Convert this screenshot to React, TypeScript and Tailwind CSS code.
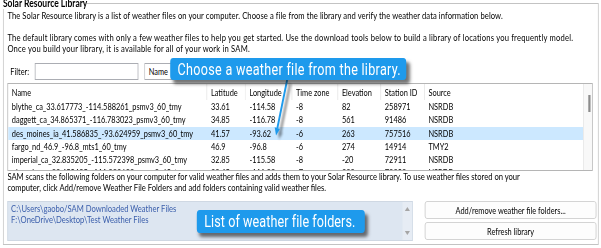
const columns = ["Name", "Latitude", "Longitude", "Time zone", "Elevation", "Station ID", "Source"];

const rows = [
  ["blythe_ca_33.617773_-114.588261_psmv3_60_tmy", "33.61", "-114.58", "-8", "82", "258971", "NSRDB"],
  ["daggett_ca_34.865371_-116.783023_psmv3_60_tmy", "34.85", "-116.78", "-8", "561", "91486", "NSRDB"],
  ["des_moines_ia_41.586835_-93.624959_psmv3_60_tmy", "41.57", "-93.62", "-6", "263", "757516", "NSRDB"],
  ["fargo_nd_46.9_-96.8_mts1_60_tmy", "46.9", "-96.8", "-6", "274", "14914", "TMY2"],
  ["imperial_ca_32.835205_-115.572398_psmv3_60_tmy", "32.85", "-115.58", "-8", "-20", "72911", "NSRDB"],
  ["phoenix_az_33.450495_-111.983688_psmv3_60_tmy", "33.45", "-111.98", "-7", "338", "78208", "NSRDB"],
];

const folders = [
  "C:\\Users\\gaobo/SAM Downloaded Weather Files",
  "F:\\OneDrive\\Desktop\\Test Weather Files",
];

const gridCols = "grid grid-cols-[269px_52px_63px_62px_58px_59px_214px]";

function WeatherTable() {
  return (
    <div className="mt-[3px] flex h-[88px] w-[791px] overflow-hidden border border-[#b5b5b5] bg-white">
      <div className="flex w-[777px] flex-col overflow-hidden">
        <div className={gridCols + " h-[16px] shrink-0"}>
          {columns.map((c, i) => (
            <div
              key={c}
              className={
                "overflow-hidden whitespace-nowrap pl-[5px] leading-[16px] " +
                (i < columns.length - 1 ? "border-r border-[#e3e3e3]" : "")
              }
            >
              {c}
            </div>
          ))}
        </div>
        {rows.map((r, ri) => (
          <div
            key={r[0]}
            className={gridCols + " h-[13.25px] shrink-0 " + (ri === 2 ? "bg-[#cce8ff]" : "")}
          >
            {r.map((cell, ci) => (
              <div key={ci} className="overflow-hidden whitespace-nowrap pl-[5px] leading-[13.25px]">
                {cell}
              </div>
            ))}
          </div>
        ))}
      </div>
      {/* thin list scrollbar */}
      <div className="flex w-[12px] justify-end border-l border-[#e6e6e6] bg-[#f8f8f8] pr-[2px] pt-[11px]">
        <div className="h-[17px] w-[3px] bg-[#8c8c8c]" />
      </div>
    </div>
  );
}

function Callout({ text, className }: { text: string; className: string }) {
  return (
    <div
      className={
        "absolute rounded-[4px] bg-[#1e9aec] pl-[10px] font-['Roboto',sans-serif] text-[17px] text-white shadow-[4px_4px_4px_rgba(0,0,0,0.55)] " +
        className
      }
    >
      {text}
    </div>
  );
}

export default function App() {
  return (
    <div className="h-[248px] w-[601px] overflow-hidden bg-white">
      <div className="relative flex h-[248px] w-[812px] origin-top-left scale-x-[0.74] flex-col font-['Lato','Noto_Sans',sans-serif] text-[10px] text-black">
        <fieldset className="-mt-[3px] ml-[4px] w-[805px] min-w-0 border border-[#c3c3c3] pb-[3px] pl-[5px] pr-[2px]">
          <legend className="-ml-[6px] p-0 text-[11.5px] font-bold leading-[12px]">Solar Resource Library</legend>

          <p className="mt-[1px] whitespace-nowrap text-[10.3px] leading-[11px] tracking-[0.1px]">
            The Solar Resource library is a list of weather files on your computer. Choose a file from the library and
            verify the weather data information below.
          </p>
          <p className="mt-[11px] whitespace-nowrap text-[10.3px] leading-[11px] tracking-[0.25px]">
            The default library comes with only a few weather files to help you get started. Use the download tools below
            to build a library of locations you frequently model.
            <br />
            Once you build your library, it is available for all of your work in SAM.
          </p>

          {/* filter row */}
          <div className="mt-[9px] flex h-[17px] items-center">
            <span className="w-[37px] pl-[4px]">Filter:</span>
            <input readOnly className="h-[17px] w-[140px] border border-[#abadb3] bg-white outline-none" />
            <div className="ml-[8px] flex h-[17px] w-[100px] items-center border border-[#abadb3] bg-white pl-[5px]">
              Name
            </div>
          </div>

          <WeatherTable />

          <p className="whitespace-nowrap text-[10.3px] leading-[11px]">
            SAM scans the following folders on your computer for valid weather files and adds them to your Solar Resource
            library. To use weather files stored on your
            <br />
            computer, click Add/remove Weather File Folders and add folders containing valid weather files.
          </p>

          <div className="mt-[8px] flex gap-[16px]">
            <div className="flex h-[40px] w-[548px] border border-[#cfd8e3] bg-[#dde6f1]">
              <div className="flex-1 pl-[4px] pt-[1px] text-[10.3px] leading-[11px] text-[#3a5eab]">
                {folders.map((f) => (
                  <div key={f} className="whitespace-nowrap">
                    {f}
                  </div>
                ))}
              </div>
              <div className="flex w-[13px] flex-col items-center justify-between bg-[#e6ecf4] py-[5px]">
                <svg width="7" height="4" viewBox="0 0 7 4">
                  <path d="M0 4 L3.5 0 L7 4 Z" fill="#a6a6a6" />
                </svg>
                <svg width="7" height="4" viewBox="0 0 7 4">
                  <path d="M0 0 L3.5 4 L7 0 Z" fill="#a6a6a6" />
                </svg>
              </div>
            </div>
            <div className="flex w-[232px] flex-col gap-[3px]">
              <button className="h-[18px] rounded-[3px] border border-[#cdcdcd] bg-[#fdfdfd] leading-[16px]">
                Add/remove weather file folders...
              </button>
              <button className="h-[18px] rounded-[3px] border border-[#cdcdcd] bg-[#fdfdfd] leading-[16px]">
                Refresh library
              </button>
            </div>
          </div>
        </fieldset>

        {/* annotation arrow */}
        <svg className="pointer-events-none absolute left-0 top-0" width="812" height="248" viewBox="0 0 812 248">
          <g opacity="0.45" style={{ filter: "blur(1.5px)" }}>
            <line x1="392" y1="84" x2="379" y2="132" stroke="#000" strokeWidth="3" />
            <path d="M382 133 L376 131 L377 139 Z" fill="#000" />
          </g>
          <line x1="388" y1="80" x2="374.7" y2="128.5" stroke="#1e9aec" strokeWidth="2.6" />
          <path d="M378.3 129.1 L371.2 127.3 L373 135.5 Z" fill="#1e9aec" />
        </svg>

        <Callout
          text="Choose a weather file from the library."
          className="left-[230px] top-[58px] h-[22px] w-[319px] tracking-[0.4px] leading-[22px]"
        />
        <Callout
          text="List of weather file folders."
          className="left-[266px] top-[210px] h-[23px] w-[227px] tracking-[0.1px] leading-[23px]"
        />
      </div>
    </div>
  );
}
